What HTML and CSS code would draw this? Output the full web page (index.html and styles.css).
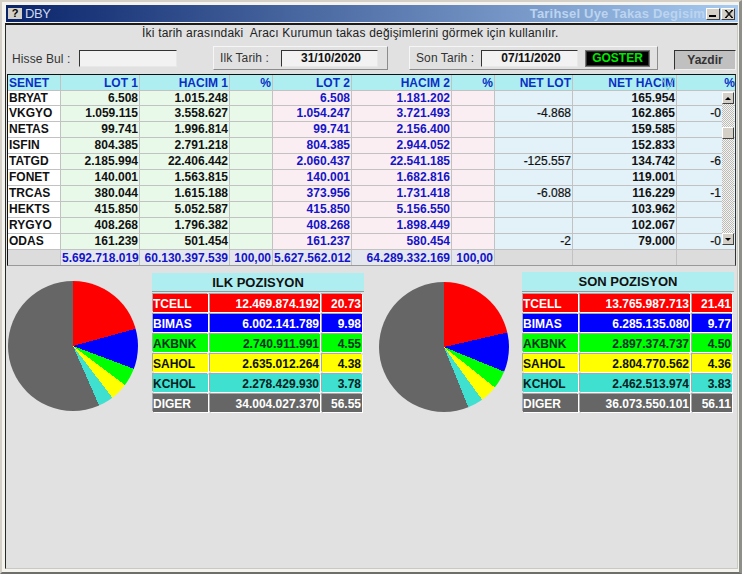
FILE: index.html
```html
<!DOCTYPE html>
<html lang="tr">
<head>
    <meta charset="UTF-8">
    <title>DBY</title>
    <link rel="stylesheet" href="styles.css">
</head>
<body>
    <div class="window">
        <div class="titlebar">
            <span class="app-icon">?</span>
            <span class="app-name">DBY</span>
            <span class="form-name">Tarihsel Uye Takas Degisim</span>
            <span class="win-btn"><span class="min-mark"></span></span>
            <span class="win-btn">
                <svg width="9" height="8" viewBox="0 0 9 8"><path d="M1 0 L8 8 M2 0 L9 8 M8 0 L1 8 M9 0 L2 8" stroke="#000" stroke-width="1" fill="none"/></svg>
            </span>
        </div>

        <div class="client">
            <div class="hint">İki tarih arasındaki&nbsp; Aracı Kurumun takas değişimlerini görmek için kullanılır.</div>

            <div class="toolbar">
                <label class="find-label">Hisse Bul :</label>
                <div class="field find-field"></div>
                <div class="date-group first">
                    <label>Ilk Tarih :</label>
                    <div class="field date-field">31/10/2020</div>
                </div>
                <div class="date-group second">
                    <label>Son Tarih :</label>
                    <div class="field date-field">07/11/2020</div>
                    <button class="show-btn">GOSTER</button>
                </div>
                <button class="print-btn">Yazdir</button>
            </div>

            <div class="grid-wrap">
                <table class="grid">
                    <colgroup>
                        <col class="c-name">
                        <col class="c-lot1">
                        <col class="c-vol1">
                        <col class="c-pct1">
                        <col class="c-lot2">
                        <col class="c-vol2">
                        <col class="c-pct2">
                        <col class="c-netlot">
                        <col class="c-netvol">
                        <col class="c-netpct">
                    </colgroup>
                    <thead>
                        <tr><th>SENET</th><th>LOT 1</th><th>HACIM 1</th><th>%</th><th>LOT 2</th><th>HACIM 2</th><th>%</th><th>NET LOT</th><th>NET HACIM</th><th>%</th></tr>
                    </thead>
                    <tbody>
                        <tr><td>BRYAT</td><td>6.508</td><td>1.015.248</td><td></td><td>6.508</td><td>1.181.202</td><td></td><td></td><td>165.954</td><td></td></tr>
                        <tr><td>VKGYO</td><td>1.059.115</td><td>3.558.627</td><td></td><td>1.054.247</td><td>3.721.493</td><td></td><td>-4.868</td><td>162.865</td><td>-0</td></tr>
                        <tr><td>NETAS</td><td>99.741</td><td>1.996.814</td><td></td><td>99.741</td><td>2.156.400</td><td></td><td></td><td>159.585</td><td></td></tr>
                        <tr><td>ISFIN</td><td>804.385</td><td>2.791.218</td><td></td><td>804.385</td><td>2.944.052</td><td></td><td></td><td>152.833</td><td></td></tr>
                        <tr><td>TATGD</td><td>2.185.994</td><td>22.406.442</td><td></td><td>2.060.437</td><td>22.541.185</td><td></td><td>-125.557</td><td>134.742</td><td>-6</td></tr>
                        <tr><td>FONET</td><td>140.001</td><td>1.563.815</td><td></td><td>140.001</td><td>1.682.816</td><td></td><td></td><td>119.001</td><td></td></tr>
                        <tr><td>TRCAS</td><td>380.044</td><td>1.615.188</td><td></td><td>373.956</td><td>1.731.418</td><td></td><td>-6.088</td><td>116.229</td><td>-1</td></tr>
                        <tr><td>HEKTS</td><td>415.850</td><td>5.052.587</td><td></td><td>415.850</td><td>5.156.550</td><td></td><td></td><td>103.962</td><td></td></tr>
                        <tr><td>RYGYO</td><td>408.268</td><td>1.796.382</td><td></td><td>408.268</td><td>1.898.449</td><td></td><td></td><td>102.067</td><td></td></tr>
                        <tr><td>ODAS</td><td>161.239</td><td>501.454</td><td></td><td>161.237</td><td>580.454</td><td></td><td>-2</td><td>79.000</td><td>-0</td></tr>
                    </tbody>
                    <tfoot>
                        <tr><td></td><td>5.692.718.019</td><td>60.130.397.539</td><td>100,00</td><td>5.627.562.012</td><td>64.289.332.169</td><td>100,00</td><td></td><td></td><td></td></tr>
                    </tfoot>
                </table>

                <!-- siralama isareti -->
                <svg class="sort-mark" width="14" height="14" viewBox="0 0 14 14"><path d="M1 1 H13 L7 13 Z" fill="none" stroke="#7fd0d8" stroke-width="1"/></svg>

                <div class="scrollbar">
                    <div class="sb-btn"><span class="arrow-up"></span></div>
                    <div class="sb-track"><div class="sb-thumb"></div></div>
                    <div class="sb-btn"><span class="arrow-down"></span></div>
                </div>
            </div>

            <div class="positions">
                <div class="pos-block first">
                    <div class="pie pie-first"></div>
                    <div class="pos-panel">
                        <div class="pos-title">ILK POZISYON</div>
                        <div class="pos-rows">
                            <div class="red">TCELL</div><div class="red num">12.469.874.192</div><div class="red num">20.73</div>
                            <div class="blue">BIMAS</div><div class="blue num">6.002.141.789</div><div class="blue num">9.98</div>
                            <div class="green">AKBNK</div><div class="green num">2.740.911.991</div><div class="green num">4.55</div>
                            <div class="yellow">SAHOL</div><div class="yellow num">2.635.012.264</div><div class="yellow num">4.38</div>
                            <div class="teal">KCHOL</div><div class="teal num">2.278.429.930</div><div class="teal num">3.78</div>
                            <div class="gray">DIGER</div><div class="gray num">34.004.027.370</div><div class="gray num">56.55</div>
                        </div>
                    </div>
                </div>
                <div class="pos-block second">
                    <div class="pie pie-second"></div>
                    <div class="pos-panel">
                        <div class="pos-title">SON POZISYON</div>
                        <div class="pos-rows">
                            <div class="red">TCELL</div><div class="red num">13.765.987.713</div><div class="red num">21.41</div>
                            <div class="blue">BIMAS</div><div class="blue num">6.285.135.080</div><div class="blue num">9.77</div>
                            <div class="green">AKBNK</div><div class="green num">2.897.374.737</div><div class="green num">4.50</div>
                            <div class="yellow">SAHOL</div><div class="yellow num">2.804.770.562</div><div class="yellow num">4.36</div>
                            <div class="teal">KCHOL</div><div class="teal num">2.462.513.974</div><div class="teal num">3.83</div>
                            <div class="gray">DIGER</div><div class="gray num">36.073.550.101</div><div class="gray num">56.11</div>
                        </div>
                    </div>
                </div>
            </div>
        </div>
    </div>
</body>
</html>
```
FILE: styles.css
```css
* {
    box-sizing: border-box;
}
body {
    margin: 0;
    font-family: "Liberation Sans", Arial, sans-serif;
    font-size: 12px;
    color: #000;
    overflow: hidden;
}

/* pencere */
.window {
    width: 742px;
    height: 574px;
    padding: 3px 1px 3px 3px;
    background: #f4f3ee;
    border-right: 3px solid #8f8f8a;
    border-bottom: 2px solid #6e6e6a;
    border-left: 2px solid #d4d0c8;
    border-top: 2px solid #d4d0c8;
    display: flex;
    flex-direction: column;
}
.titlebar {
    height: 17px;
    flex: none;
    margin-left: 1px;
    display: flex;
    align-items: center;
    background: linear-gradient(90deg, #0a246a, #a6caf0);
    padding-left: 2px;
    padding-right: 3px;
}
.app-icon {
    width: 14px;
    height: 11px;
    background: #d4d0c8;
    color: #000;
    font-weight: bold;
    font-size: 11px;
    line-height: 11px;
    text-align: center;
}
.app-name {
    margin-left: 3px;
    font-size: 13px;
    letter-spacing: -0.4px;
    color: #cdd8ee;
}
.form-name {
    margin-left: auto;
    margin-right: 0;
    font-weight: bold;
    font-size: 13px;
    color: #bcd4ef;
    letter-spacing: 0.2px;
    white-space: nowrap;
}
.win-btn {
    width: 14px;
    height: 12px;
    margin-left: 1px;
    background: #d4d0c8;
    border: 1px solid;
    border-color: #fff #404040 #404040 #fff;
    display: flex;
    align-items: center;
    justify-content: center;
}
.min-mark {
    width: 7px;
    height: 2px;
    background: #000;
    margin-top: 5px;
    margin-right: 1px;
}

.client {
    flex: 1;
    background: #e1e1e1;
    border-top: 2px solid #1c1c1c;
    margin-top: 1px;
    border-left: 1px solid #2a2a2a;
    border-right: 1px solid #c9c9c4;
    border-bottom: 1px solid #c9c9c4;
}
.hint {
    height: 21px;
    padding-left: 136px;
    line-height: 16px;
    color: #222;
    letter-spacing: 0.2px;
}

/* ust arac satiri */
.toolbar {
    display: flex;
    align-items: flex-start;
    height: 28px;
    padding-left: 6px;
    color: #333;
}
.toolbar label {
    letter-spacing: 0.1px;
}
.find-label {
    width: 67px;
    margin-top: 6px;
    letter-spacing: 0.2px;
}
.field {
    background: #f2f2f2;
    border: 1px solid;
    border-color: #333 #e8e8e8 #e8e8e8 #333;
    height: 17px;
    line-height: 15px;
    text-align: center;
    font-weight: bold;
    color: #111;
}
.find-field {
    width: 98px;
    margin-top: 4px;
}
.date-group {
    height: 24px;
    display: flex;
    align-items: center;
    padding-left: 6px;
    background: #e1e1e1;
    border: 1px solid;
    border-color: #f6f6f6 #8c8c8c #8c8c8c #f6f6f6;
}
.date-group.first {
    width: 175px;
    margin-left: 36px;
}
.date-group.second {
    width: 249px;
    margin-left: 21px;
}
.date-group.first label {
    width: 61px;
}
.date-group.second label {
    width: 65px;
}
.date-field {
    width: 97px;
    padding-left: 3px;
}
.show-btn {
    width: 65px;
    height: 17px;
    margin-left: 7px;
    padding: 0;
    background: #000;
    border: 1px solid #777;
    outline: 1px solid #333;
    outline-offset: -2px;
    color: #00e800;
    font: bold 12px "Liberation Sans", Arial, sans-serif;
}
.print-btn {
    width: 62px;
    height: 20px;
    margin-top: 4px;
    margin-left: 16px;
    padding: 0;
    background: #c0c0c0;
    border: 1px solid;
    border-color: #333 #f0f0f0 #f0f0f0 #333;
    color: #333;
    font: bold 12px "Liberation Sans", Arial, sans-serif;
}

/* tablo */
.grid-wrap {
    position: relative;
    margin-left: 1px;
    width: 729px;
    height: 192px;
    border-top: 1px solid #111;
    border-left: 1px solid #111;
    border-right: 1px solid #333;
    border-bottom: 1px solid #999;
    overflow: hidden;
}
.grid {
    table-layout: fixed;
    border-collapse: separate;
    border-spacing: 0;
    width: 728px;
    font-weight: bold;
}
.c-name { width: 53px; background: #fff; }
.c-lot1 { width: 79px; background: #e9f9e9; }
.c-vol1 { width: 90px; background: #e9f9e9; }
.c-pct1 { width: 43px; background: #e9f9e9; }
.c-lot2 { width: 79px; background: #fbeef2; }
.c-vol2 { width: 100px; background: #fbeef2; }
.c-pct2 { width: 43px; background: #fbeef2; }
.c-netlot { width: 78px; background: #e3f1f8; }
.c-netvol { width: 104px; background: #e3f1f8; }
.c-netpct { width: 59px; background: #e3f1f8; }

.grid th,
.grid td {
    height: 16px;
    padding: 0 1px;
    line-height: 15px;
    text-align: right;
    white-space: nowrap;
    overflow: hidden;
    border-right: 1px solid #c2c2c2;
    border-bottom: 1px solid #c2c2c2;
}
.grid th {
    background: #aeeef0;
    color: #0a2fc4;
    padding-top: 2px;
    line-height: 13px;
}
.grid tbody tr:first-child td {
    height: 15px;
    line-height: 14px;
}
.grid th:first-child,
.grid td:first-child {
    text-align: left;
}
.grid th:last-child,
.grid td:last-child {
    border-right: none;
}
.grid tbody td:last-child {
    padding-right: 15px;
}
.grid tbody td {
    color: #111;
}
.grid tbody td:nth-child(5),
.grid tbody td:nth-child(6) {
    color: #1414c8;
}
.grid tbody td:nth-child(8),
.grid tbody td:nth-child(10) {
    font-weight: normal;
    -webkit-text-stroke: 0.2px #111;
}
.grid tfoot td {
    height: 15px;
    line-height: 14px;
    background: #e4e8ee;
    color: #1414c8;
    border-bottom: none;
}
.grid tfoot td:first-child,
.grid tfoot td:nth-child(n+8) {
    background: #dcdcdc;
}
.sort-mark {
    position: absolute;
    top: 2px;
    left: 653px;
}

/* kaydirma cubugu */
.scrollbar {
    position: absolute;
    top: 17px;
    right: 1px;
    width: 12px;
    height: 153px;
    display: flex;
    flex-direction: column;
}
.sb-btn {
    flex: none;
    height: 12px;
    background: #d4d0c8;
    border: 1px solid;
    border-color: #fff #404040 #404040 #fff;
    display: flex;
    align-items: center;
    justify-content: center;
}
.arrow-up,
.arrow-down {
    width: 0;
    height: 0;
    border-left: 3px solid transparent;
    border-right: 3px solid transparent;
}
.arrow-up {
    border-bottom: 3px solid #000;
}
.arrow-down {
    border-top: 3px solid #000;
}
.sb-track {
    flex: 1;
    padding-top: 23px;
    background: repeating-conic-gradient(#f4f4f4 0 25%, #bdbbb6 0 50%) 0 0 / 2px 2px;
}
.sb-thumb {
    height: 12px;
    background: #d4d0c8;
    border: 1px solid;
    border-color: #fff #404040 #404040 #fff;
}

/* pozisyonlar */
.positions {
    display: flex;
}
.pos-block {
    display: flex;
    align-items: flex-start;
}
.pos-block.first {
    margin-left: 2px;
    margin-top: 7px;
}
.pos-block.second {
    margin-left: 15px;
    margin-top: 6px;
}
.pie {
    width: 130px;
    height: 130px;
    border-radius: 50%;
}
.pos-block.first .pie {
    margin-top: 8px;
}
.pos-block.second .pie {
    margin-top: 10px;
}
.pie-first {
    background: conic-gradient(#f00 0 20.73%, #00f 0 30.71%, #0f0 0 35.26%, #ff0 0 39.64%, #40e0d0 0 43.42%, #666 0);
}
.pie-second {
    background: conic-gradient(#f00 0 21.41%, #00f 0 31.18%, #0f0 0 35.68%, #ff0 0 40.04%, #40e0d0 0 43.87%, #666 0);
}
.pos-panel {
    width: 212px;
    margin-left: 14px;
}
.pos-block.second .pos-panel {
    margin-left: 13px;
}
.pos-title {
    height: 19px;
    background: #aeeef0;
    font-size: 13px;
    font-weight: bold;
    line-height: 20px;
    text-align: center;
    color: #111;
    border-bottom: 1px solid #999;
}
.pos-block.second .pos-title {
    height: 20px;
}
.pos-rows {
    display: grid;
    grid-template-columns: 55px 110px 40px;
    grid-auto-rows: 18px;
    gap: 2px;
    margin: 2px 0 0 1px;
    font-weight: bold;
}
.pos-rows div {
    padding: 0 1px 0 0;
    line-height: 20px;
    white-space: nowrap;
    overflow: hidden;
    box-shadow: 1px 1px 0 #fff, -1px -1px 0 #a8a8a8;
}
.pos-rows .num {
    text-align: right;
}
.red { background: #f00; color: #fff; }
.blue { background: #00f; color: #fff; }
.green { background: #0f0; color: #032; }
.yellow { background: #ff0; color: #110; }
.teal { background: #40e0d0; color: #022; }
.gray { background: #666; color: #fff; }
```
